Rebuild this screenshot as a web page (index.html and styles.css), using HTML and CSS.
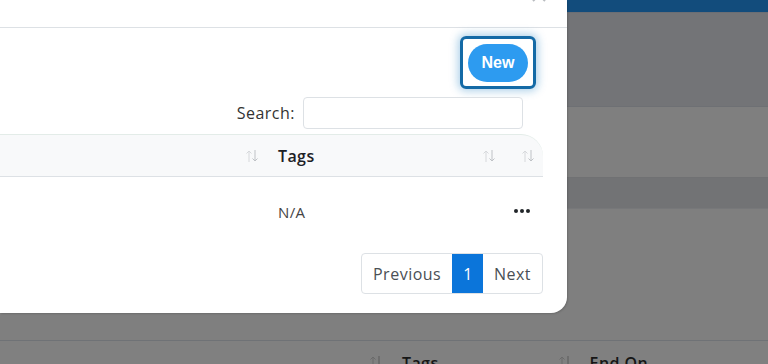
FILE: index.html
```html
<!DOCTYPE html>
<html lang="en">
<head>
    <meta charset="UTF-8">
    <meta name="viewport" content="width=device-width, initial-scale=1.0">
    <title>Events</title>
    <link rel="stylesheet" href="styles.css">
</head>

<body>
    <!-- Page behind the overlay -->
    <div class="page">
        <div class="topbar"></div>
        <div class="page-header"></div>
        <div class="page-section"></div>
        <div class="page-band"></div>
        <div class="page-body"></div>
        <div class="page-thead">
            <span class="bg-sort bg-sort-1">
                <svg width="12" height="14" viewBox="0 0 12 14"><path d="M3 13V2M0.5 4.5L3 2l2.5 2.5" fill="none" stroke="#6a6a6a" stroke-width="1"/><path d="M9 1v11M6.5 9.5L9 12l2.5-2.5" fill="none" stroke="#5a5a5a" stroke-width="1"/></svg>
            </span>
            <span class="bg-th bg-tags">Tags</span>
            <span class="bg-sort bg-sort-2">
                <svg width="12" height="14" viewBox="0 0 12 14"><path d="M3 13V2M0.5 4.5L3 2l2.5 2.5" fill="none" stroke="#6a6a6a" stroke-width="1"/><path d="M9 1v11M6.5 9.5L9 12l2.5-2.5" fill="none" stroke="#5a5a5a" stroke-width="1"/></svg>
            </span>
            <span class="bg-th bg-end">End On</span>
        </div>
    </div>

    <!-- Modal -->
    <div class="modal">
        <div class="modal-header">
            <button class="btn-close" aria-label="Close">
                <svg width="14" height="14" viewBox="0 0 14 14"><path d="M1 1l12 12M13 1L1 13" stroke="#b9bcc0" stroke-width="2" fill="none"/></svg>
            </button>
        </div>

        <div class="modal-body">
            <div class="toolbar">
                <div class="focus-ring">
                    <button class="btn-new">New</button>
                </div>
            </div>

            <div class="filter">
                <label for="search">Search:</label>
                <input id="search" type="search">
            </div>

            <div class="table">
                <div class="thead">
                    <div class="th">
                        <span></span>
                        <svg class="sort" width="12" height="14" viewBox="0 0 12 14"><path d="M3 13V2M0.5 4.5L3 2l2.5 2.5" fill="none" stroke="#d6d8db" stroke-width="1"/><path d="M9 1v11M6.5 9.5L9 12l2.5-2.5" fill="none" stroke="#bfc2c6" stroke-width="1"/></svg>
                    </div>
                    <div class="th">
                        <span>Tags</span>
                        <svg class="sort" width="12" height="14" viewBox="0 0 12 14"><path d="M3 13V2M0.5 4.5L3 2l2.5 2.5" fill="none" stroke="#d6d8db" stroke-width="1"/><path d="M9 1v11M6.5 9.5L9 12l2.5-2.5" fill="none" stroke="#bfc2c6" stroke-width="1"/></svg>
                    </div>
                    <div class="th">
                        <span></span>
                        <svg class="sort" width="12" height="14" viewBox="0 0 12 14"><path d="M3 13V2M0.5 4.5L3 2l2.5 2.5" fill="none" stroke="#d6d8db" stroke-width="1"/><path d="M9 1v11M6.5 9.5L9 12l2.5-2.5" fill="none" stroke="#bfc2c6" stroke-width="1"/></svg>
                    </div>
                </div>
                <div class="tr">
                    <div class="td"></div>
                    <div class="td">N/A</div>
                    <div class="td td-actions">
                        <svg width="16" height="4" viewBox="0 0 16 4"><circle cx="2" cy="2" r="2" fill="#212529"/><circle cx="8" cy="2" r="2" fill="#212529"/><circle cx="14" cy="2" r="2" fill="#212529"/></svg>
                    </div>
                </div>
            </div>

            <div class="pager">
                <ul class="pagination">
                    <li class="page-item">Previous</li>
                    <li class="page-item active">1</li>
                    <li class="page-item">Next</li>
                </ul>
            </div>
        </div>
    </div>
</body>
</html>
```

FILE: styles.css
```css
/* styles.css */
body {
    font-family: "Open Sans", sans-serif;
    margin: 0;
    padding: 0;
    background-color: #808080;
    overflow: hidden;
    height: 364px;
}

/* ---- page under the overlay ---- */
.page {
    display: flex;
    flex-direction: column;
}

.topbar {
    height: 12px;
    background-color: #124c7c;
    border-bottom: 1px solid #6b6e74;
}

.page-header {
    height: 93px;
    background-color: #737477;
    border-bottom: 1px solid #6e7074;
}

.page-section {
    height: 70px;
    background-color: #7f7f7f;
}

.page-band {
    height: 30px;
    background-color: #727375;
    border-top: 1px solid #707173;
    border-bottom: 1px solid #77787a;
}

.page-body {
    height: 131px;
    background-color: #7f7f7f;
    border-bottom: 1px solid #6f7276;
}

.page-thead {
    display: flex;
    align-items: center;
    height: 23px;
    padding-top: 4px;
    color: #161616;
    font-weight: 600;
    font-size: 16px;
    letter-spacing: 0.4px;
}

.bg-sort-1 {
    margin-left: 370px;
}

.bg-tags {
    margin-left: 20px;
}

.bg-sort-2 {
    margin-left: 120px;
}

.bg-end {
    margin-left: 19px;
}

.bg-th {
    line-height: 1;
    padding-top: 12px;
}

.bg-sort {
    padding-top: 12px;
}

/* ---- modal ---- */
.modal {
    position: absolute;
    left: 0;
    top: 0;
    width: 567px;
    height: 313px;
    background-color: #fff;
    border-bottom-right-radius: 16px;
    box-shadow: 1px 1px 2px rgba(0, 0, 0, 0.15);
}

.modal-header {
    height: 27px;
    border-bottom: 1px solid #dde1e5;
    display: flex;
    justify-content: flex-end;
    align-items: flex-start;
}

.btn-close {
    border: none;
    background: none;
    padding: 0;
    margin-top: -12px;
    margin-right: 21px;
    width: 14px;
    height: 14px;
    line-height: 0;
}

.modal-body {
    padding: 8px 24px 0 0;
}

.toolbar {
    display: flex;
    justify-content: flex-end;
    padding-right: 7px;
}

.focus-ring {
    box-sizing: border-box;
    width: 76px;
    height: 53px;
    border: 3px solid #146aa6;
    border-radius: 6px;
    box-shadow: 0 0 8px 2px rgba(20, 120, 190, 0.35);
    display: flex;
    align-items: center;
    justify-content: center;
}

.btn-new {
    width: 60px;
    height: 38px;
    border: none;
    border-radius: 19px;
    background-color: #2d9bf0;
    color: #fff;
    font-family: "Liberation Sans", Arial, sans-serif;
    font-weight: bold;
    font-size: 16px;
    padding: 0;
}

.filter {
    display: flex;
    justify-content: flex-end;
    align-items: center;
    gap: 8px;
    margin-top: 8px;
    padding-right: 20px;
    color: #333;
    font-size: 16px;
    letter-spacing: 0.5px;
}

.filter input {
    box-sizing: border-box;
    width: 220px;
    height: 32px;
    border: 1px solid #dde1e5;
    border-radius: 4px;
    margin: 0;
}

.table {
    margin-top: 5px;
    font-size: 15px;
    letter-spacing: 0.4px;
    color: #333;
}

.thead,
.tr {
    display: grid;
    grid-template-columns: 1fr 237px 39px;
}

.thead {
    height: 41px;
    background-color: #f8f9fa;
    border-top: 1px solid #e3ece8;
    border-bottom: 1px solid #dde1e5;
    border-top-right-radius: 22px;
}

.th {
    display: flex;
    align-items: center;
    justify-content: space-between;
    padding: 0 9px 0 11px;
    font-weight: 600;
    font-size: 16px;
    color: #1d2126;
}

.tr {
    height: 70px;
}

.td {
    display: flex;
    align-items: center;
    padding: 0 11px;
    color: #444;
}

.td-actions {
    padding: 0 0 2px 10px;
}

.pager {
    display: flex;
    justify-content: flex-end;
    margin-top: 6px;
}

.pagination {
    display: flex;
    list-style-type: none;
    margin: 0;
    padding: 0;
    border: 1px solid #dde1e5;
    border-radius: 4px;
    height: 39px;
}

.page-item {
    display: flex;
    align-items: center;
    padding: 0 11px;
    color: #4a4f55;
    font-size: 16px;
    letter-spacing: 0.5px;
}

.page-item.active {
    background-color: #0b75da;
    color: #fff;
    padding: 0 10px 0 11px;
}
```
